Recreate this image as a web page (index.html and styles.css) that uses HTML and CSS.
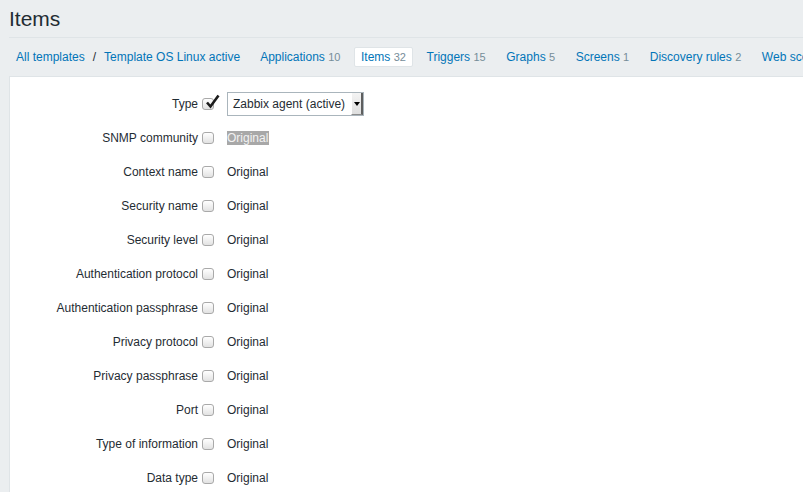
FILE: index.html
```html
<!DOCTYPE html>
<html>
<head>
<meta charset="utf-8">
<title>Items</title>
<link rel="stylesheet" href="styles.css">
</head>
<body>
<div class="page">
  <header class="header">
    <h1 class="title">Items</h1>
  </header>
  <nav class="tabs">
    <a class="crumb">All templates</a>
    <span class="sep">/</span>
    <a class="crumb">Template OS Linux active</a>
    <a class="tab first">Applications <span class="count">10</span></a>
    <a class="tab selected">Items <span class="count">32</span></a>
    <a class="tab">Triggers <span class="count">15</span></a>
    <a class="tab">Graphs <span class="count">5</span></a>
    <a class="tab">Screens <span class="count">1</span></a>
    <a class="tab">Discovery rules <span class="count">2</span></a>
    <a class="tab">Web scenarios</a>
  </nav>
  <main class="content">
    <div class="row">
      <span class="label">Type</span>
      <span class="cb checked">
        <svg class="tick" width="17" height="16" viewBox="0 0 17 16"><polyline points="3,9.5 6.5,13.5 14.5,2.5" fill="none" stroke="#1c1c1c" stroke-width="2.6" stroke-linejoin="miter"/></svg>
      </span>
      <span class="value">
        <span class="select"><span class="select-text">Zabbix agent (active)</span><span class="select-btn"><span class="arrow"></span></span></span>
      </span>
    </div>
    <div class="row"><span class="label">SNMP community</span><span class="cb"></span><span class="value"><span class="hl">Original</span></span></div>
    <div class="row"><span class="label">Context name</span><span class="cb"></span><span class="value">Original</span></div>
    <div class="row"><span class="label">Security name</span><span class="cb"></span><span class="value">Original</span></div>
    <div class="row"><span class="label">Security level</span><span class="cb"></span><span class="value">Original</span></div>
    <div class="row"><span class="label">Authentication protocol</span><span class="cb"></span><span class="value">Original</span></div>
    <div class="row"><span class="label">Authentication passphrase</span><span class="cb"></span><span class="value">Original</span></div>
    <div class="row"><span class="label">Privacy protocol</span><span class="cb"></span><span class="value">Original</span></div>
    <div class="row"><span class="label">Privacy passphrase</span><span class="cb"></span><span class="value">Original</span></div>
    <div class="row"><span class="label">Port</span><span class="cb"></span><span class="value">Original</span></div>
    <div class="row"><span class="label">Type of information</span><span class="cb"></span><span class="value">Original</span></div>
    <div class="row"><span class="label">Data type</span><span class="cb"></span><span class="value">Original</span></div>
  </main>
</div>
</body>
</html>
```
FILE: styles.css
```css
html, body {
  margin: 0;
  padding: 0;
  overflow: hidden;
  background: #ebeef0;
}
body {
  font-family: "Liberation Sans", Arial, sans-serif;
  font-size: 12px;
  color: #1f2c33;
}
.page {
  width: 1100px;
  height: 492px;
  padding-left: 9px;
  display: flex;
  flex-direction: column;
}
.header {
  padding: 7px 0 6px;
  border-bottom: 1px solid #dfe4e7;
}
.title {
  margin: 0;
  font-size: 21px;
  font-weight: normal;
  line-height: 24px;
  color: #1f2c33;
}
.tabs {
  display: flex;
  align-items: center;
  white-space: nowrap;
  padding: 9px 0 9px 0;
}
.tabs a {
  color: #0275b8;
  text-decoration: none;
  line-height: 18px;
  padding: 0 6px;
  border: 1px solid transparent;
  border-radius: 2px;
}
.sep {
  padding: 0 1px;
  color: #1f2c33;
  line-height: 18px;
}
.tab {
  margin-left: 6.6px;
}
.tab.first {
  margin-left: 6px;
}
.tab.selected {
  background: #ffffff;
  border-color: #dfe4e7;
}
.count {
  color: #768d99;
  font-size: 11px;
}
.content {
  flex: 1;
  background: #ffffff;
  border-top: 1px solid #dfe4e7;
  border-left: 1px solid #dfe4e7;
  padding-top: 10px;
}
.row {
  display: flex;
  align-items: center;
  height: 34px;
}
.label {
  width: 188px;
  text-align: right;
  flex: none;
}
.cb {
  position: relative;
  flex: none;
  box-sizing: border-box;
  width: 12px;
  height: 12px;
  margin-left: 4px;
  border: 1px solid #a9a9a9;
  border-radius: 3px;
  background: linear-gradient(#ffffff, #e2e2e2);
}
.tick {
  position: absolute;
  left: 1px;
  top: -6px;
}
.value {
  margin-left: 13px;
  display: flex;
  align-items: center;
}
.hl {
  background: #a8a8a8;
  color: #f2f2f2;
  line-height: 14px;
  padding: 0 1px 0 0;
}
.select {
  box-sizing: border-box;
  display: flex;
  align-items: stretch;
  width: 137px;
  height: 24px;
  border: 1px solid #aab5bc;
  background: #ffffff;
}
.select-text {
  flex: 1;
  padding-left: 5px;
  line-height: 22px;
  color: #1f2c33;
}
.select-btn {
  box-sizing: border-box;
  width: 12px;
  display: flex;
  align-items: center;
  justify-content: center;
  background: linear-gradient(#f4f4f4, #dedede);
  border-left: 1px solid #ffffff;
  border-right: 2px solid #5e5e5e;
  border-bottom: 1px solid #8c8c8c;
}
.arrow {
  width: 0;
  height: 0;
  border-left: 3px solid transparent;
  border-right: 3px solid transparent;
  border-top: 4px solid #000000;
}
```
